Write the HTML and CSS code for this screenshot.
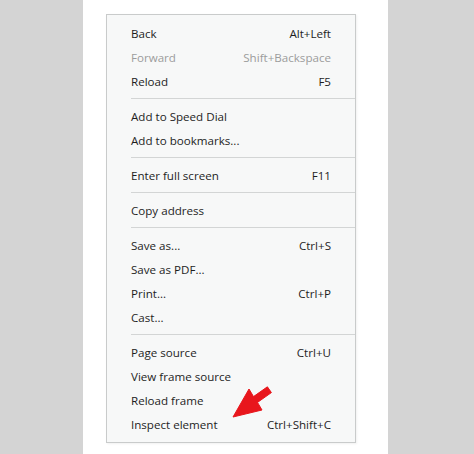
FILE: index.html
```html
<!DOCTYPE html>
<html>
<head>
<meta charset="utf-8">
<link rel="stylesheet" href="styles.css">
</head>
<body>
<div class="page">
  <div class="bar"></div>
  <div class="center">
    <div class="menu">
      <div class="item"><span>Back</span><span>Alt+Left</span></div>
      <div class="item disabled"><span>Forward</span><span>Shift+Backspace</span></div>
      <div class="item"><span>Reload</span><span>F5</span></div>
      <div class="sep"></div>
      <div class="item"><span>Add to Speed Dial</span></div>
      <div class="item"><span>Add to bookmarks...</span></div>
      <div class="sep"></div>
      <div class="item"><span>Enter full screen</span><span>F11</span></div>
      <div class="sep"></div>
      <div class="item"><span>Copy address</span></div>
      <div class="sep"></div>
      <div class="item"><span>Save as...</span><span>Ctrl+S</span></div>
      <div class="item"><span>Save as PDF...</span></div>
      <div class="item"><span>Print...</span><span>Ctrl+P</span></div>
      <div class="item"><span>Cast...</span></div>
      <div class="sep"></div>
      <div class="item"><span>Page source</span><span>Ctrl+U</span></div>
      <div class="item"><span>View frame source</span></div>
      <div class="item"><span>Reload frame</span></div>
      <div class="item"><span>Inspect element</span><span>Ctrl+Shift+C</span></div>
    </div>
  </div>
  <div class="bar bar-right"></div>
</div>
<svg class="arrow" viewBox="228 383 50 40" width="50" height="40">
  <polygon points="233,417 249,389 253.5,396.6 267.4,386.8 271.4,392.6 257.5,402.4 262,410" fill="#e8161c" stroke="#e8161c" stroke-width="1" stroke-linejoin="round"/>
</svg>
</body>
</html>
```

FILE: styles.css
```css
html, body {
  margin: 0;
  padding: 0;
  background: #ffffff;
}
body {
  font-family: "Open Sans", "Noto Sans", "DejaVu Sans", sans-serif;
  font-size: 11.6px;
  color: #1e1e1e;
  position: relative;
  width: 474px;
  height: 454px;
  overflow: hidden;
}
.page {
  display: flex;
  height: 454px;
}
.bar {
  width: 83px;
  background: #d4d4d4;
  flex: none;
}
.bar-right {
  width: 86px;
}
.center {
  width: 305px;
  flex: none;
  padding-top: 14px;
  padding-left: 23px;
  box-sizing: border-box;
}
.menu {
  width: 250px;
  box-sizing: border-box;
  border: 1px solid #c9cbcb;
  background: #f7f8f8;
  padding: 6px 0 6px;
  box-shadow: 1px 1px 2px rgba(0, 0, 0, 0.06);
}
.item {
  height: 24px;
  display: flex;
  align-items: center;
  justify-content: space-between;
  padding: 0 24px;
  white-space: nowrap;
}
.disabled {
  color: #9c9c9c;
}
.sep {
  height: 1px;
  background: #d3d5d5;
  margin: 5px 0 5px 24px;
}
.arrow {
  position: absolute;
  left: 228px;
  top: 383px;
}
```
